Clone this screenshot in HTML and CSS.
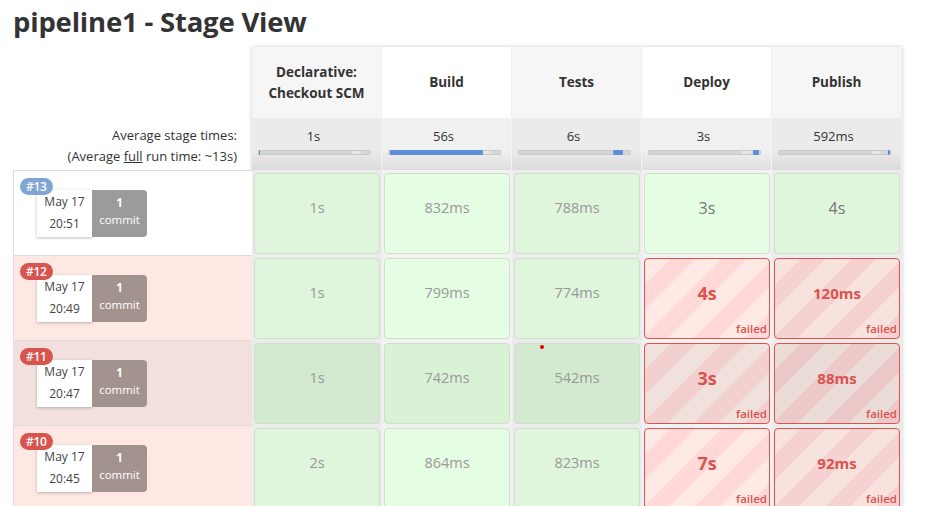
FILE: index.html
```html
<!DOCTYPE html>
<html>
<head>
<meta charset="utf-8">
<link rel="stylesheet" href="styles.css">
</head>
<body>
<div class="page">
  <h1 class="title">pipeline1 - Stage View</h1>
  <div class="table">
    <div class="leads">
      <div class="lead-head"></div>
      <div class="lead-avg">
        <div>Average stage times:</div>
        <div>(Average <u>full</u> run time: ~13s)</div>
      </div>
      <div class="lead-run ok">
        <span class="badge blue">#13</span>
        <div class="run-info">
          <div class="date"><div>May 17</div><div>20:51</div></div>
          <div class="commit"><b>1</b><div>commit</div></div>
        </div>
      </div>
      <div class="lead-run fail">
        <span class="badge red">#12</span>
        <div class="run-info">
          <div class="date"><div>May 17</div><div>20:49</div></div>
          <div class="commit"><b>1</b><div>commit</div></div>
        </div>
      </div>
      <div class="lead-run fail hover">
        <span class="badge red">#11</span>
        <div class="run-info">
          <div class="date"><div>May 17</div><div>20:47</div></div>
          <div class="commit"><b>1</b><div>commit</div></div>
        </div>
      </div>
      <div class="lead-run fail">
        <span class="badge red">#10</span>
        <div class="run-info">
          <div class="date"><div>May 17</div><div>20:45</div></div>
          <div class="commit"><b>1</b><div>commit</div></div>
        </div>
      </div>
    </div>

    <div class="stages">
      <div class="srow head">
        <div class="hcell odd">Declarative:<br>Checkout SCM</div>
        <div class="hcell even">Build</div>
        <div class="hcell odd">Tests</div>
        <div class="hcell even">Deploy</div>
        <div class="hcell odd">Publish</div>
      </div>
      <div class="srow avg">
        <div class="acell odd"><div>1s</div><div class="bar"><span class="fill" style="left:0%;width:1%"></span></div></div>
        <div class="acell even"><div>56s</div><div class="bar"><span class="fill" style="left:1%;width:84%"></span></div></div>
        <div class="acell odd"><div>6s</div><div class="bar"><span class="fill" style="left:85%;width:9%"></span></div></div>
        <div class="acell even"><div>3s</div><div class="bar"><span class="fill" style="left:94%;width:5%"></span></div></div>
        <div class="acell odd"><div>592ms</div><div class="bar"><span class="fill" style="left:98.5%;width:1.5%"></span></div></div>
      </div>

      <div class="srow run">
        <div class="col odd"><div class="cell ok">1s</div></div>
        <div class="col even"><div class="cell ok">832ms</div></div>
        <div class="col odd"><div class="cell ok">788ms</div></div>
        <div class="col even"><div class="cell ok big">3s</div></div>
        <div class="col odd"><div class="cell ok big">4s</div></div>
      </div>
      <div class="srow run">
        <div class="col odd"><div class="cell ok">1s</div></div>
        <div class="col even"><div class="cell ok">799ms</div></div>
        <div class="col odd"><div class="cell ok">774ms</div></div>
        <div class="col even"><div class="cell bad short">4s<span class="failed">failed</span></div></div>
        <div class="col odd"><div class="cell bad">120ms<span class="failed">failed</span></div></div>
      </div>
      <div class="srow run hover">
        <div class="col odd"><div class="cell ok">1s</div></div>
        <div class="col even"><div class="cell ok">742ms</div></div>
        <div class="col odd"><div class="cell ok">542ms<span class="dot"></span></div></div>
        <div class="col even"><div class="cell bad short">3s<span class="failed">failed</span></div></div>
        <div class="col odd"><div class="cell bad">88ms<span class="failed">failed</span></div></div>
      </div>
      <div class="srow run">
        <div class="col odd"><div class="cell ok">2s</div></div>
        <div class="col even"><div class="cell ok">864ms</div></div>
        <div class="col odd"><div class="cell ok">823ms</div></div>
        <div class="col even"><div class="cell bad short">7s<span class="failed">failed</span></div></div>
        <div class="col odd"><div class="cell bad">92ms<span class="failed">failed</span></div></div>
      </div>
    </div>
  </div>
</div>
</body>
</html>
```
FILE: styles.css
```css
* { box-sizing: border-box; }
html, body { margin: 0; padding: 0; background: #fff; }
body {
  font-family: "Open Sans", "Noto Sans", sans-serif;
  color: #333;
  overflow: hidden;
}
.page { padding: 0 0 0 13px; }
.title {
  margin: 0;
  padding-top: 4px;
  height: 47px;
  font-size: 27.5px;
  font-weight: 700;
  line-height: 36px;
  color: #333;
  letter-spacing: -0.2px;
}
.table { display: flex; align-items: flex-start; }
.leads { width: 239px; }
.lead-head { height: 71px; }
.lead-avg {
  height: 52px;
  padding: 7px 15px 0 0;
  text-align: right;
  font-size: 13px;
  line-height: 21px;
}
.lead-run {
  position: relative;
  height: 85px;
  border-top: 1px solid #ddd;
  border-left: 1px solid #ddd;
  padding: 19px 0 0 23px;
}
.lead-run.ok { background: #fff; }
.lead-run.fail { background: #fee8e4; }
.lead-run.fail.hover { background: #f1e0dc; }
.badge {
  position: absolute;
  left: 6px;
  top: 7px;
  z-index: 2;
  height: 17px;
  padding: 0 6px;
  border-radius: 9px;
  color: #fff;
  font-size: 12px;
  line-height: 17px;
  font-weight: 600;
  letter-spacing: -0.3px;
}
.badge.blue { background: #7ea5d4; }
.badge.red { background: #d9534f; }
.run-info { display: flex; height: 47px; }
.date {
  width: 55px;
  background: #fff;
  box-shadow: 0 1px 3px rgba(0,0,0,.25);
  text-align: center;
  font-size: 12px;
  line-height: 22px;
  padding-top: 1px;
  color: #444;
}
.commit {
  width: 55px;
  border-radius: 0 4px 4px 0;
  color: #fff;
  text-align: center;
  font-size: 11.5px;
  line-height: 17px;
  padding-top: 4px;
}
.commit b { display: block; font-weight: 700; }
.ok .commit { background: #9b9b9b; }
.fail .commit { background: #a2938f; }

.stages {
  width: 650px;
  box-shadow: 0 0 4px rgba(0,0,0,.22);
  background: #eee;
}
.srow { display: grid; grid-template-columns: repeat(5, 130px); }
.head .hcell {
  height: 71px;
  display: flex;
  align-items: center;
  justify-content: center;
  text-align: center;
  font-weight: 700;
  font-size: 13.5px;
  line-height: 21px;
  border-right: 1px solid #f0f0f0;
}
.hcell.odd { background: #f6f6f6; }
.hcell.even { background: #fff; }
.avg .acell {
  height: 52px;
  padding: 8px 0 0 6px;
  text-align: center;
  font-size: 13px;
  line-height: 20px;
  border-right: 1px solid #f4f4f4;
}
.acell > div:first-child { padding-right: 12px; }
.acell.odd { background: linear-gradient(#ebebeb 0, #ebebeb 62%, #dadada 100%); }
.acell.even { background: linear-gradient(#f0f0f0 0, #f0f0f0 62%, #dedede 100%); }
.bar {
  position: relative;
  margin-top: 4px;
  width: 113px;
  height: 5px;
  background: linear-gradient(90deg, #d4d4d4 0, #d4d4d4 84%, #e6e6e6 84%, #e6e6e6 92%, #d8d8d8 92%);
  border: 1px solid #cacaca;
  border-radius: 1px;
}
.fill {
  position: absolute;
  top: -1px;
  height: 5px;
  background: #5c8fd6;
  border-radius: 1px;
}
.run .col { height: 85px; padding: 3px 2px 1px 2px; }
.col.odd { background: #ececec; }
.col.even { background: #f2f2f2; }
.cell {
  position: relative;
  height: 81px;
  border-radius: 4px;
  text-align: center;
  padding-top: 24px;
  font-size: 14.5px;
  line-height: 20px;
}
.cell.ok {
  border: 1px solid #cfdfcc;
  color: #999;
}
.odd .cell.ok { background: #dff5dc; }
.even .cell.ok { background: #e5fde2; }
.hover .odd .cell.ok { background: #d3ead0; }
.hover .even .cell.ok { background: #d9f2d6; }
.cell.ok.big { font-size: 16px; color: #777; }
.cell.bad {
  border: 1px solid #e0524f;
  color: #d9534f;
  font-weight: 700;
  font-size: 15px;
}
.cell.bad.short { font-size: 18px; }
.even .cell.bad { background: repeating-linear-gradient(135deg, #ffe9e5 0, #ffe9e5 18px, #ffd8d7 18px, #ffd8d7 36px); }
.odd .cell.bad { background: repeating-linear-gradient(135deg, #f8e2de 0, #f8e2de 18px, #f6d1d1 18px, #f6d1d1 36px); }
.hover .even .cell.bad { background: repeating-linear-gradient(135deg, #f1e1dc 0, #f1e1dc 18px, #f2d0cf 18px, #f2d0cf 36px); }
.hover .odd .cell.bad { background: repeating-linear-gradient(135deg, #ebdcd8 0, #ebdcd8 18px, #ecc9c9 18px, #ecc9c9 36px); }
.failed {
  position: absolute;
  right: 2px;
  bottom: 3px;
  font-size: 11.5px;
  line-height: 13px;
  font-weight: 600;
  color: #d9534f;
}
.dot {
  position: absolute;
  left: 25px;
  top: 1px;
  width: 4px;
  height: 4px;
  border-radius: 50%;
  background: #e00;
}
```
